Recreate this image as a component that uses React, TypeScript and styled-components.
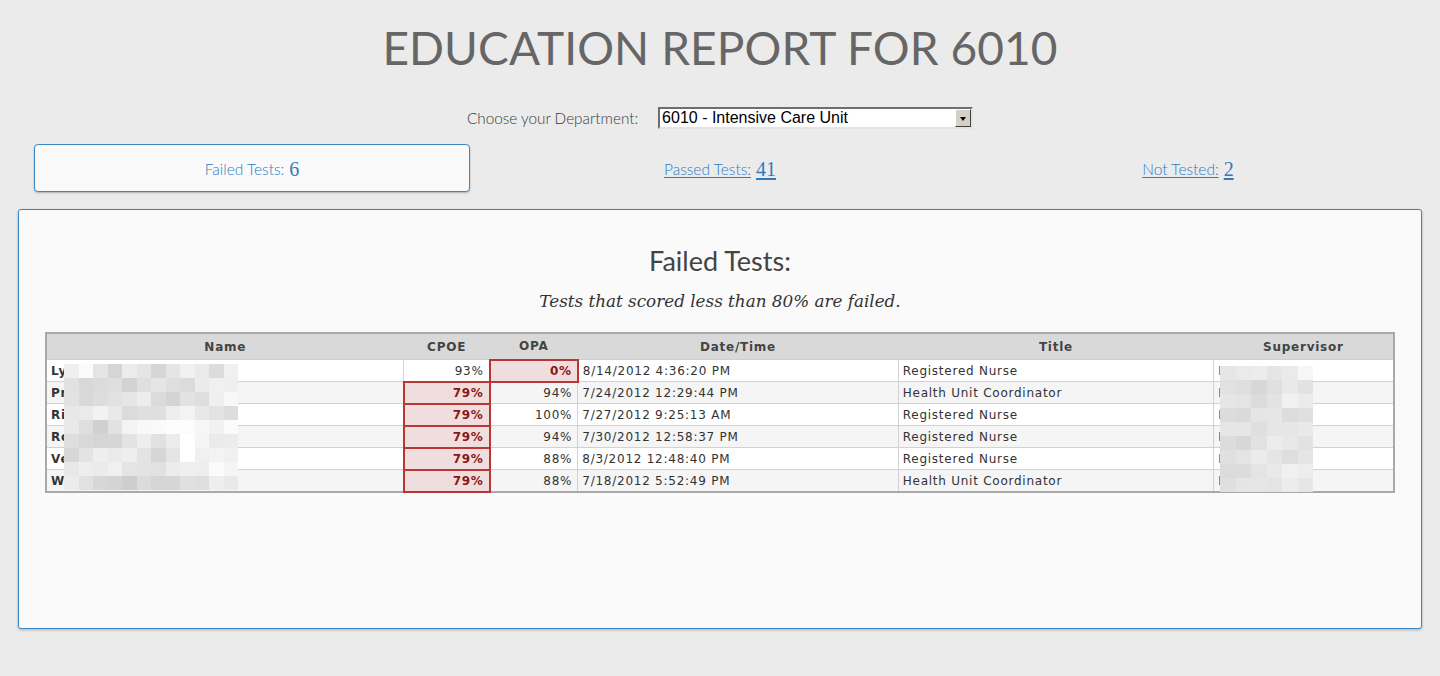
import React from "react";
import styled, { createGlobalStyle, css } from "styled-components";

const Global = createGlobalStyle`
  html, body { margin: 0; padding: 0; }
  body {
    background: #ebebeb;
    font-family: Lato, "Open Sans", sans-serif;
    width: 1440px;
    height: 676px;
    overflow: hidden;
  }
`;

const Page = styled.div`
  display: flex;
  flex-direction: column;
  align-items: stretch;
`;

const Title = styled.h1`
  margin: 0;
  padding-top: 25px;
  text-align: center;
  font-family: Lato, sans-serif;
  font-weight: 400;
  font-size: 46px;
  line-height: 1;
  color: #666;
  letter-spacing: 0.1px;
`;

const DeptRow = styled.div`
  margin-top: 36px;
  display: flex;
  justify-content: center;
  align-items: center;
  gap: 20px;
  height: 22px;
`;

const DeptLabel = styled.label`
  font-family: Lato, sans-serif;
  font-weight: 300;
  font-size: 15.3px;
  color: #3a3a3a;
`;

const SelectBox = styled.div`
  display: flex;
  width: 315px;
  height: 22px;
  box-sizing: border-box;
  border: 2px solid;
  border-color: #6e6e6e #e4e4e4 #e4e4e4 #6e6e6e;
  background: #fff;
`;

const NativeSelect = styled.select`
  appearance: none;
  -webkit-appearance: none;
  flex: 1;
  min-width: 0;
  border: none;
  outline: none;
  background: transparent;
  font-family: "Liberation Sans", Arial, sans-serif;
  font-size: 16px;
  color: #000;
  padding: 0 0 0 2px;
  margin: 0;
  height: 18px;
  line-height: 18px;
`;

const ArrowButton = styled.span`
  width: 16px;
  height: 18px;
  box-sizing: border-box;
  background: #d4d0c8;
  border: 1px solid;
  border-color: #fff #404040 #404040 #fff;
  display: flex;
  align-items: center;
  justify-content: center;
  &::after {
    content: "";
    border-left: 3.5px solid transparent;
    border-right: 3.5px solid transparent;
    border-top: 4px solid #000;
    margin-top: 1px;
  }
`;

const Tabs = styled.div`
  margin-top: 15px;
  padding: 0 34px;
  display: grid;
  grid-template-columns: repeat(3, 436px);
  column-gap: 32px;
  height: 48px;
`;

const Tab = styled.a<{ $active?: boolean }>`
  display: flex;
  align-items: center;
  justify-content: center;
  box-sizing: border-box;
  color: #2f7bbf;
  font-family: Lato, sans-serif;
  font-weight: 300;
  font-size: 15.5px;
  cursor: pointer;
  padding-top: 2px;
  ${(p) =>
    p.$active
      ? css`
          background: #fafafa;
          border: 1px solid #3a87c8;
          border-radius: 4px;
          box-shadow: 0 1px 2px rgba(0, 0, 0, 0.25);
          text-decoration: none;
        `
      : css`
          text-decoration: underline;
          text-underline-offset: 2px;
        `}
`;

const TabCount = styled.span`
  font-family: "Liberation Serif", serif;
  font-size: 20px;
  margin-left: 5px;
`;

const Panel = styled.section`
  margin: 17px 18px 0;
  height: 420px;
  box-sizing: border-box;
  background: #fafafa;
  border: 1px solid #3a87c8;
  border-radius: 3px;
  box-shadow: 0 1px 3px rgba(0, 0, 0, 0.25);
  padding: 37px 26px 0;
  display: flex;
  flex-direction: column;
`;

const PanelHeading = styled.h2`
  margin: 0;
  text-align: center;
  font-family: Lato, sans-serif;
  font-weight: 400;
  font-size: 27px;
  line-height: 1;
  color: #444;
`;

const PanelNote = styled.p`
  margin: 19px 0 0;
  text-align: center;
  font-family: "DejaVu Serif", Georgia, serif;
  font-style: italic;
  font-size: 16.8px;
  line-height: 1;
  color: #333;
`;

const TableWrap = styled.div`
  position: relative;
  margin-top: 22px;
  width: 1350px;
`;

const Table = styled.table`
  width: 1350px;
  table-layout: fixed;
  border-collapse: collapse;
  border: 2px solid #a9a9a9;
  font-family: "DejaVu Sans", Verdana, sans-serif;
  font-size: 12px;
  letter-spacing: 0.75px;
  color: #333;
`;

const HeadCell = styled.th`
  height: 25px;
  padding: 0;
  background: #d9d9d9;
  color: #444;
  font-weight: bold;
  text-align: center;
  border-bottom: 1px solid #cfcfcf;
`;

const Row = styled.tr<{ $alt?: boolean }>`
  background: ${(p) => (p.$alt ? "#f5f5f5" : "#ffffff")};
`;

const Cell = styled.td<{ $align?: "left" | "right"; $bold?: boolean; $fail?: boolean }>`
  height: 20px;
  padding: 0 5px 0 4px;
  border: 1px solid #d2d2d2;
  text-align: ${(p) => p.$align ?? "left"};
  font-weight: ${(p) => (p.$bold ? "bold" : "normal")};
  white-space: nowrap;
  overflow: hidden;
  ${(p) =>
    p.$fail &&
    css`
      border: 2px solid #b83636;
      background: #f0dede;
      color: #8a1616;
      font-weight: bold;
    `}
`;

const Mosaic = styled.div<{ $left: number; $top: number; $cols: number; $cell: number }>`
  position: absolute;
  left: ${(p) => p.$left}px;
  top: ${(p) => p.$top}px;
  display: grid;
  grid-template-columns: repeat(${(p) => p.$cols}, ${(p) => p.$cell}px);
  grid-auto-rows: 14px;
`;

const Tile = styled.div``;

function tiles(cols: number, rows: number, seed: number, base: number, spread: number) {
  let s = seed;
  const out: string[] = [];
  for (let r = 0; r < rows; r++) {
    let prev = base + spread / 2;
    for (let c = 0; c < cols; c++) {
      s = (s * 9301 + 49297) % 233280;
      const rnd = s / 233280;
      const bias = c > cols * 0.5 ? 10 : 0;
      const raw = base + bias + rnd * spread;
      const v = Math.min(255, Math.round((raw + prev) / 2));
      prev = raw;
      out.push(`rgb(${v},${v},${v})`);
    }
  }
  return out;
}

const nameTiles = tiles(12, 9, 17, 200, 56);
const supTiles = tiles(6, 9, 91, 210, 30);

type Rec = {
  name: string;
  cpoe: string;
  opa: string;
  cpoeFail?: boolean;
  opaFail?: boolean;
  date: string;
  title: string;
  sup: string;
};

const rows: Rec[] = [
  { name: "Ly", cpoe: "93%", opa: "0%", opaFail: true, date: "8/14/2012 4:36:20 PM", title: "Registered Nurse", sup: "L" },
  { name: "Pr", cpoe: "79%", cpoeFail: true, opa: "94%", date: "7/24/2012 12:29:44 PM", title: "Health Unit Coordinator", sup: "L" },
  { name: "Ri", cpoe: "79%", cpoeFail: true, opa: "100%", date: "7/27/2012 9:25:13 AM", title: "Registered Nurse", sup: "L" },
  { name: "Ro", cpoe: "79%", cpoeFail: true, opa: "94%", date: "7/30/2012 12:58:37 PM", title: "Registered Nurse", sup: "L" },
  { name: "Ve", cpoe: "79%", cpoeFail: true, opa: "88%", date: "8/3/2012 12:48:40 PM", title: "Registered Nurse", sup: "L" },
  { name: "W", cpoe: "79%", cpoeFail: true, opa: "88%", date: "7/18/2012 5:52:49 PM", title: "Health Unit Coordinator", sup: "L" },
];

export default function App() {
  return (
    <>
      <Global />
      <Page>
        <Title>EDUCATION REPORT FOR 6010</Title>
        <DeptRow>
          <DeptLabel htmlFor="dept">Choose your Department:</DeptLabel>
          <SelectBox>
            <NativeSelect id="dept" defaultValue="6010">
              <option value="6010">6010 - Intensive Care Unit</option>
            </NativeSelect>
            <ArrowButton />
          </SelectBox>
        </DeptRow>
        <Tabs>
          <Tab $active>
            Failed Tests:<TabCount>6</TabCount>
          </Tab>
          <Tab>
            Passed Tests:<TabCount>41</TabCount>
          </Tab>
          <Tab>
            Not Tested:<TabCount>2</TabCount>
          </Tab>
        </Tabs>
        <Panel>
          <PanelHeading>Failed Tests:</PanelHeading>
          <PanelNote>Tests that scored less than 80% are failed.</PanelNote>
          <TableWrap>
            <Table>
              <colgroup>
                <col style={{ width: 357 }} />
                <col style={{ width: 86 }} />
                <col style={{ width: 88 }} />
                <col style={{ width: 320 }} />
                <col style={{ width: 315 }} />
                <col style={{ width: 180 }} />
              </colgroup>
              <thead>
                <tr>
                  <HeadCell>Name</HeadCell>
                  <HeadCell>CPOE</HeadCell>
                  <HeadCell>OPA</HeadCell>
                  <HeadCell>Date/Time</HeadCell>
                  <HeadCell>Title</HeadCell>
                  <HeadCell>Supervisor</HeadCell>
                </tr>
              </thead>
              <tbody>
                {rows.map((r, i) => (
                  <Row key={i} $alt={i % 2 === 1}>
                    <Cell $bold>{r.name}</Cell>
                    <Cell $align="right" $fail={r.cpoeFail}>{r.cpoe}</Cell>
                    <Cell $align="right" $fail={r.opaFail}>{r.opa}</Cell>
                    <Cell>{r.date}</Cell>
                    <Cell>{r.title}</Cell>
                    <Cell>{r.sup}</Cell>
                  </Row>
                ))}
              </tbody>
            </Table>
            <Mosaic $left={19} $top={32} $cols={12} $cell={14.5}>
              {nameTiles.map((c, i) => (
                <Tile key={i} style={{ background: c }} />
              ))}
            </Mosaic>
            <Mosaic $left={1175} $top={34} $cols={6} $cell={15.5}>
              {supTiles.map((c, i) => (
                <Tile key={i} style={{ background: c }} />
              ))}
            </Mosaic>
          </TableWrap>
        </Panel>
      </Page>
    </>
  );
}
